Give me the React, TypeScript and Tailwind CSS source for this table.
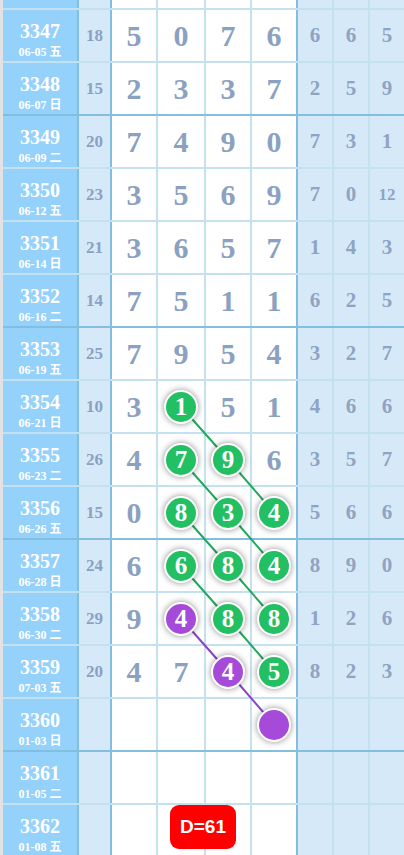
const SERIF = "font-['Liberation_Serif','Noto_Sans_CJK_SC',serif]";

type Row = {
  id: number;
  date: string;
  sum: string;
  main: string[];
  right: string[];
};

// cell codes: "5" plain digit, "g1" green ball, "p4" purple ball, "p" empty purple ball
const rows: Row[] = [
  { id: 3347, date: "06-05 五", sum: "18", main: ["5", "0", "7", "6"], right: ["6", "6", "5"] },
  { id: 3348, date: "06-07 日", sum: "15", main: ["2", "3", "3", "7"], right: ["2", "5", "9"] },
  { id: 3349, date: "06-09 二", sum: "20", main: ["7", "4", "9", "0"], right: ["7", "3", "1"] },
  { id: 3350, date: "06-12 五", sum: "23", main: ["3", "5", "6", "9"], right: ["7", "0", "12"] },
  { id: 3351, date: "06-14 日", sum: "21", main: ["3", "6", "5", "7"], right: ["1", "4", "3"] },
  { id: 3352, date: "06-16 二", sum: "14", main: ["7", "5", "1", "1"], right: ["6", "2", "5"] },
  { id: 3353, date: "06-19 五", sum: "25", main: ["7", "9", "5", "4"], right: ["3", "2", "7"] },
  { id: 3354, date: "06-21 日", sum: "10", main: ["3", "g1", "5", "1"], right: ["4", "6", "6"] },
  { id: 3355, date: "06-23 二", sum: "26", main: ["4", "g7", "g9", "6"], right: ["3", "5", "7"] },
  { id: 3356, date: "06-26 五", sum: "15", main: ["0", "g8", "g3", "g4"], right: ["5", "6", "6"] },
  { id: 3357, date: "06-28 日", sum: "24", main: ["6", "g6", "g8", "g4"], right: ["8", "9", "0"] },
  { id: 3358, date: "06-30 二", sum: "29", main: ["9", "p4", "g8", "g8"], right: ["1", "2", "6"] },
  { id: 3359, date: "07-03 五", sum: "20", main: ["4", "7", "p4", "g5"], right: ["8", "2", "3"] },
  { id: 3360, date: "01-03 日", sum: "", main: ["", "", "", "p"], right: ["", "", ""] },
  { id: 3361, date: "01-05 二", sum: "", main: ["", "", "", ""], right: ["", "", ""] },
  { id: 3362, date: "01-08 五", sum: "", main: ["", "", "", ""], right: ["", "", ""] },
];

const GRID = "grid grid-cols-[76px_33px_46px_48px_46px_46px_36px_36px_34px]";

const colCls = [
  "bg-[#94d1fb] border-r-2 border-[#84bede]",
  "bg-[#d6e9f9] border-r-2 border-[#84bede]",
  "bg-white border-r-2 border-[#c4e1f0]",
  "bg-white border-r-2 border-[#c4e1f0]",
  "bg-white border-r-2 border-[#c4e1f0]",
  "bg-white border-r-2 border-[#84bede]",
  "bg-[#d6e9f9] border-r-2 border-[#c4e1f0]",
  "bg-[#d6e9f9] border-r-2 border-[#c4e1f0]",
  "bg-[#d6e9f9]",
];

// ball connections, page coords (col centres 181/228/274, row centre = 10 + 53*i + 25.5)
const lines = [
  { color: "#20a95a", pts: "181,406.5 228,459.5 274,512.5" },
  { color: "#20a95a", pts: "181,459.5 228,512.5 274,565.5" },
  { color: "#20a95a", pts: "181,512.5 228,565.5 274,618.5" },
  { color: "#20a95a", pts: "181,565.5 228,618.5 274,671.5" },
  { color: "#8b43c6", pts: "181,618.5 228,671.5 274,724.5" },
];

function Ball({ code }: { code: string }) {
  const purple = code[0] === "p";
  return (
    <div
      className={`relative z-10 flex h-[34px] w-[34px] items-center justify-center rounded-full border-2 border-white text-[25px] font-bold leading-none text-white shadow-[0_0_6px_rgba(0,0,0,0.45)] ${
        purple ? "bg-[#a64bd9]" : "bg-[#22bf63]"
      }`}
    >
      {code.slice(1)}
    </div>
  );
}

function MainCell({ code, col }: { code: string; col: number }) {
  return (
    <div className={`flex items-center justify-center ${colCls[col]}`}>
      {code[0] === "g" || code[0] === "p" ? (
        <Ball code={code} />
      ) : (
        <span className="text-[30px] font-bold leading-none text-[#8aa1c1]">{code}</span>
      )}
    </div>
  );
}

function TableRow({ r }: { r: Row }) {
  const groupEnd = (r.id - 3348) % 4 === 0;
  return (
    <div
      className={`${GRID} relative h-[53px] border-b-2 ${
        groupEnd ? "border-[#84bede]" : "border-[#c4e1f0]"
      }`}
    >
      <div className={`flex flex-col items-center justify-center gap-[3px] pt-[8px] text-white ${colCls[0]}`}>
        <span className="text-[20px] font-bold leading-[22px]">{r.id}</span>
        <span className="text-[12px] font-bold leading-[14px]">{r.date}</span>
      </div>
      <div className={`flex items-center justify-center ${colCls[1]}`}>
        <span className="text-[17px] font-bold text-[#8aa1c1]">{r.sum}</span>
      </div>
      {r.main.map((c, i) => (
        <MainCell key={i} code={c} col={2 + i} />
      ))}
      {r.right.map((c, i) => (
        <div key={i} className={`flex items-center justify-center ${colCls[6 + i]}`}>
          <span
            className={`font-bold leading-none text-[#8ea4c2] ${
              c.length > 1 ? "text-[17px]" : "text-[21px]"
            }`}
          >
            {c}
          </span>
        </div>
      ))}
      {r.id === 3362 && (
        <div className="absolute left-[167px] top-0 z-20 flex h-[44px] w-[66px] items-center justify-center rounded-[9px] bg-[#ff0000] font-['Liberation_Sans',Arial,sans-serif] text-[19px] font-bold text-white">
          D=61
        </div>
      )}
    </div>
  );
}

export default function App() {
  return (
    <div className={`relative flex h-[855px] w-[404px] overflow-hidden bg-white ${SERIF}`}>
      <div className="w-[3px] shrink-0 bg-[#e2e2e2]" />
      <div className="w-[401px]">
        {/* tail of the previous row, scrolled off */}
        <div className={`${GRID} h-[10px] border-b-2 border-[#c4e1f0]`}>
          {colCls.map((c, i) => (
            <div key={i} className={c} />
          ))}
        </div>
        {rows.map((r) => (
          <TableRow key={r.id} r={r} />
        ))}
      </div>
      <svg className="pointer-events-none absolute left-0 top-0 z-0" width="404" height="855">
        {lines.map((l, i) => (
          <polyline key={i} points={l.pts} fill="none" stroke={l.color} strokeWidth="2" />
        ))}
      </svg>
    </div>
  );
}
